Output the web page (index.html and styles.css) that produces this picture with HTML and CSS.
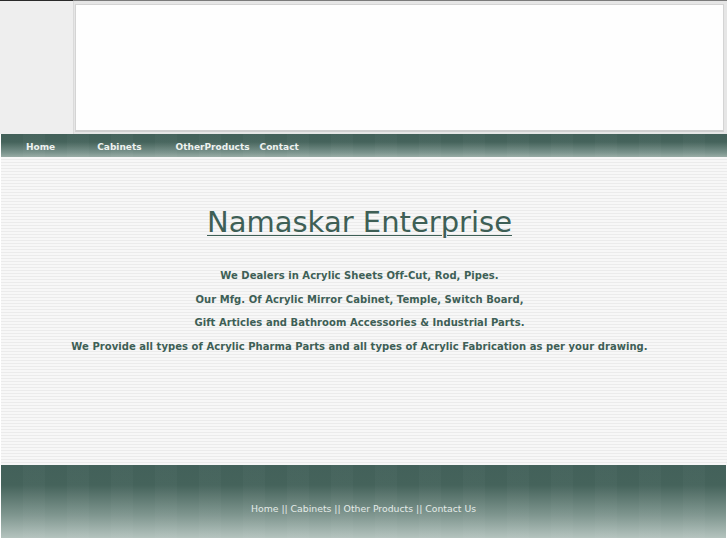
FILE: index.html
```html
<!DOCTYPE html>
<html>
<head>
<meta charset="utf-8">
<title>Namaskar Enterprise</title>
<link rel="stylesheet" href="styles.css">
</head>
<body>
<div class="page">
  <div class="header">
    <div class="logo-area"></div>
    <div class="banner-wrap"><div class="banner"></div></div>
  </div>
  <div class="nav">
    <a class="nav-link n-home" href="#">Home</a>
    <a class="nav-link n-cab" href="#">Cabinets</a>
    <a class="nav-link n-other" href="#">OtherProducts</a>
    <a class="nav-link n-contact" href="#">Contact</a>
  </div>
  <div class="main">
    <h1 class="title"><a href="#">Namaskar Enterprise</a></h1>
    <p class="line">We Dealers in Acrylic Sheets Off-Cut, Rod, Pipes.</p>
    <p class="line">Our Mfg. Of Acrylic Mirror Cabinet, Temple, Switch Board,</p>
    <p class="line">Gift Articles and Bathroom Accessories &amp; Industrial Parts.</p>
    <p class="line">We Provide all types of Acrylic Pharma Parts and all types of Acrylic Fabrication as per your drawing.</p>
  </div>
  <div class="footer">
    <div class="footer-links">
      <a href="#">Home</a> || <a href="#">Cabinets</a> || <a href="#">Other Products</a> || <a href="#">Contact Us</a>
    </div>
  </div>
</div>
</body>
</html>
```
FILE: styles.css
```css
html, body {
  margin: 0;
  padding: 0;
  background: #ffffff;
}
body {
  font-family: "DejaVu Sans", sans-serif;
}
.page {
  width: 727px;
}
.header {
  display: flex;
  height: 134px;
  background: #e2e2e2;
  border-top: 1px solid #7a7a7a;
  box-sizing: border-box;
}
.logo-area {
  width: 73px;
  background: #eeeeee;
  border-top: 1px solid #2a2a2a;
  margin-top: -1px;
  border-right: 1px solid #dadada;
}
.banner-wrap {
  flex: 1;
  padding: 3px 3px 2px 1px;
  background: #e6e6e6;
}
.banner {
  height: 100%;
  box-sizing: border-box;
  background: #fefefe;
  border: 1px solid #d4d4d4;
  border-bottom: 2px solid #d0d0d0;
}
.nav {
  display: flex;
  align-items: center;
  height: 23px;
  padding-top: 3px;
  box-sizing: border-box;
  margin-left: 1px;
  background:
    repeating-linear-gradient(90deg, rgba(255,255,255,0) 0 22px, rgba(255,255,255,0.025) 22px 44px),
    linear-gradient(#43615a 0, #45635b 8px, #7c958e 19px, #98aba5 23px);
}
.nav-link {
  font-size: 9px;
  font-weight: bold;
  color: #eef2f0;
  text-decoration: none;
}
.n-home { margin-left: 25px; }
.n-cab { margin-left: 42px; }
.n-other { margin-left: 34px; }
.n-contact { margin-left: 10px; }
.main {
  height: 308px;
  margin-left: 1px;
  padding-top: 47px;
  padding-right: 9px;
  box-sizing: border-box;
  background: repeating-linear-gradient(#f7f7f7 0 2px, #ebebeb 2px 3px);
  text-align: center;
  color: #3e5f56;
}
.title {
  margin: 0 0 24px 0;
  font-size: 29px;
  font-weight: normal;
  line-height: 36px;
}
.title a {
  color: #3e5f56;
  text-decoration: underline;
  text-decoration-thickness: 1px;
  text-underline-offset: 3px;
}
.line {
  margin: 0;
  font-size: 10px;
  font-weight: bold;
  letter-spacing: 0.05px;
  line-height: 23.5px;
}
.footer {
  height: 73px;
  margin-left: 1px;
  margin-right: 1px;
  display: flex;
  align-items: flex-start;
  justify-content: center;
  background:
    repeating-linear-gradient(90deg, rgba(255,255,255,0) 0 22px, rgba(255,255,255,0.025) 22px 44px),
    linear-gradient(#43615a 0, #45635b 20px, #7f968f 50px, #b4c3be 73px);
}
.footer-links {
  margin-top: 38px;
  font-size: 9.3px;
  color: #e4ebe8;
}
.footer-links a {
  color: #e4ebe8;
  text-decoration: none;
}
```
